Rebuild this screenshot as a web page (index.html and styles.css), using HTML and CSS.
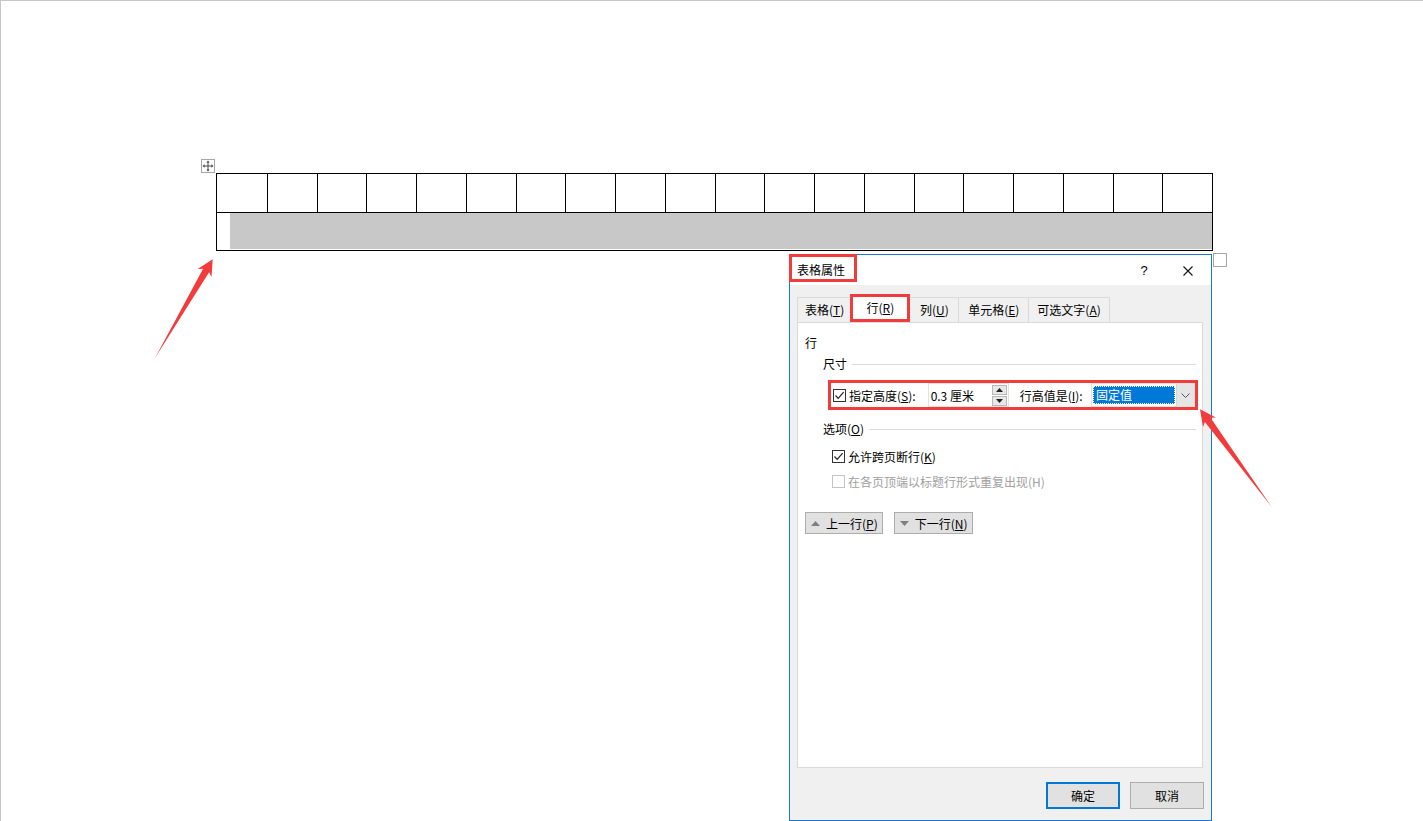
FILE: index.html
```html
<html>
<head>
    <title>表格属性</title>
    <link rel="stylesheet" href="styles.css">
</head>
<body>
    <div class="page">
        <div class="table-area">
            <div class="move-handle">
                <svg width="12" height="12" viewBox="0 0 12 12">
                    <path d="M6 2v8M2 6h8" stroke="#4a4a4a" stroke-width="1" fill="none"/>
                    <path d="M6 0.5L4.3 2.6H7.7Z M6 11.5L4.3 9.4H7.7Z M0.5 6L2.6 4.3V7.7Z M11.5 6L9.4 4.3V7.7Z" fill="#4a4a4a"/>
                </svg>
            </div>
            <div class="doc-table">
                <div class="doc-row">
                    <div></div><div></div><div></div><div></div><div></div>
                    <div></div><div></div><div></div><div></div><div></div>
                    <div></div><div></div><div></div><div></div><div></div>
                    <div></div><div></div><div></div><div></div><div></div>
                </div>
                <div class="doc-row-merged">
                    <div class="shade"></div>
                </div>
            </div>
            <div class="resize-handle"></div>
        </div>
    </div>

    <div class="dialog">
        <div class="titlebar">
            <div class="title">表格属性</div>
            <div class="help">?</div>
            <div class="close">
                <svg width="10" height="10" viewBox="0 0 10 10">
                    <path d="M0.5 0.5L9.5 9.5M9.5 0.5L0.5 9.5" stroke="#111" stroke-width="1.1" fill="none"/>
                </svg>
            </div>
        </div>

        <div class="dlg-body">
            <div class="tabs">
                <div class="tab">表格(<u>T</u>)</div>
                <div class="tab active">行(<u>R</u>)</div>
                <div class="tab">列(<u>U</u>)</div>
                <div class="tab">单元格(<u>E</u>)</div>
                <div class="tab">可选文字(<u>A</u>)</div>
            </div>

            <div class="panel">
                <div class="panel-title">行</div>

                <div class="group-head">尺寸</div>
                <div class="size-row">
                    <span class="cb">
                        <svg width="11" height="11" viewBox="0 0 11 11"><path d="M1.5 5.5L4.2 8.3L9.6 2.2" stroke="#222" stroke-width="1.2" fill="none"/></svg>
                    </span>
                    <span class="field-label">指定高度(<u>S</u>):</span>
                    <div class="num-input">
                        <span class="num-value">0.3 厘米</span>
                        <div class="spin">
                            <div class="spin-btn">
                                <svg width="7" height="4" viewBox="0 0 7 4"><path d="M3.5 0L7 4H0Z" fill="#222"/></svg>
                            </div>
                            <div class="spin-btn">
                                <svg width="7" height="4" viewBox="0 0 7 4"><path d="M3.5 4L7 0H0Z" fill="#222"/></svg>
                            </div>
                        </div>
                    </div>
                    <span class="field-label rule-label">行高值是(<u>I</u>):</span>
                    <div class="select">
                        <div class="select-value">固定值</div>
                        <div class="select-drop">
                            <svg width="9" height="5" viewBox="0 0 9 5"><path d="M0.5 0.5L4.5 4.5L8.5 0.5" stroke="#555" stroke-width="1" fill="none"/></svg>
                        </div>
                    </div>
                </div>

                <div class="group-head options-head">选项(<u>O</u>)</div>
                <div class="check-row first">
                    <span class="cb">
                        <svg width="11" height="11" viewBox="0 0 11 11"><path d="M1.5 5.5L4.2 8.3L9.6 2.2" stroke="#222" stroke-width="1.2" fill="none"/></svg>
                    </span>
                    <span>允许跨页断行(<u>K</u>)</span>
                </div>
                <div class="check-row disabled">
                    <span class="cb"></span>
                    <span>在各页顶端以标题行形式重复出现(H)</span>
                </div>

                <div class="nav-buttons">
                    <div class="nav-btn">
                        <svg width="9" height="5" viewBox="0 0 9 5"><path d="M4.5 0L9 5H0Z" fill="#808080"/></svg>
                        <span>上一行(<u>P</u>)</span>
                    </div>
                    <div class="nav-btn">
                        <svg width="9" height="5" viewBox="0 0 9 5"><path d="M4.5 5L9 0H0Z" fill="#808080"/></svg>
                        <span>下一行(<u>N</u>)</span>
                    </div>
                </div>
            </div>

            <div class="dlg-footer">
                <div class="btn default">确定</div>
                <div class="btn">取消</div>
            </div>
        </div>
    </div>

    <!-- annotation arrows -->
    <svg class="arrows" width="1423" height="821" viewBox="0 0 1423 821">
        <polygon points="212.7,259.3 211.5,277.1 209.1,272.3 155,358 203.1,268.7 197.7,269.1" fill="#f23c3c"/>
        <polygon points="1200,409.3 1215.9,417.5 1210.5,417.7 1271.7,507 1204.9,421.9 1203,426.9" fill="#f23c3c"/>
    </svg>
</body>
</html>
```

FILE: styles.css
```css
body {
    margin: 0;
    background-color: #ffffff;
    color: #000000;
    font-family: "Noto Sans CJK SC", "Microsoft YaHei", sans-serif;
    font-size: 12px;
    overflow: hidden;
}

u {
    text-underline-offset: 1px;
}

.page {
    height: 821px;
    box-sizing: border-box;
    border-top: 1px solid #c6c6c6;
    border-left: 1px solid #c6c6c6;
    padding: 158px 0 0 200px;
}

.table-area {
    display: grid;
    grid-template-columns: 15px 997px 16px;
    grid-template-rows: 14px 78px 16px;
}

.move-handle {
    width: 14px;
    height: 14px;
    box-sizing: border-box;
    border: 1px solid #a6a6a6;
    display: flex;
    align-items: center;
    justify-content: center;
}

.doc-table {
    grid-column: 2;
    grid-row: 2;
    border: 1px solid #000;
}

.doc-row {
    display: grid;
    grid-template-columns: repeat(20, 1fr);
    height: 38px;
    border-bottom: 1px solid #000;
}

.doc-row div + div {
    border-left: 1px solid #000;
}

.doc-row-merged {
    height: 37px;
    box-sizing: border-box;
    padding: 0 0 1px 13px;
}

.shade {
    height: 100%;
    background-color: #c8c8c8;
}

.resize-handle {
    grid-column: 3;
    grid-row: 3;
    width: 14px;
    height: 14px;
    box-sizing: border-box;
    border: 1px solid #a6a6a6;
    margin-top: 2px;
}

/* dialog window */
.dialog {
    position: absolute;
    left: 789px;
    top: 254px;
    width: 423px;
    height: 567px;
    box-sizing: border-box;
    border: 1px solid #1979d4;
    background-color: #f0f0f0;
    display: flex;
    flex-direction: column;
}

.titlebar {
    height: 30px;
    flex-shrink: 0;
    background-color: #ffffff;
    display: flex;
    align-items: flex-start;
}

.title {
    margin: -1px 0 0 -1px;
    width: 68px;
    height: 28px;
    box-sizing: border-box;
    border: 3px solid #f23b3b;
    padding: 4px 0 0 5px;
    line-height: 17px;
}

.help {
    margin-left: auto;
    width: 42px;
    height: 30px;
    line-height: 32px;
    text-align: center;
    font-family: "Liberation Sans", Arial, sans-serif;
    font-size: 13px;
}

.close {
    width: 46px;
    height: 31px;
    display: flex;
    align-items: center;
    justify-content: center;
}

.dlg-body {
    flex: 1;
    padding: 9px 7px 0 7px;
    display: flex;
    flex-direction: column;
}

.tabs {
    display: flex;
    align-items: flex-end;
    height: 28px;
}

.tab {
    height: 25px;
    min-width: 50px;
    box-sizing: border-box;
    border: 1px solid #d9d9d9;
    border-bottom: none;
    margin-left: -1px;
    padding: 0 8px;
    line-height: 24px;
    text-align: center;
}

.tab:first-child {
    margin-left: 0;
    padding: 0 6px 0 7px;
}

.tab.active {
    height: 28px;
    min-width: 60px;
    border: 3px solid #f23b3b;
    background-color: #ffffff;
    line-height: 21px;
    position: relative;
}

.tab:nth-child(4) {
    min-width: 71px;
}

.tab:nth-child(5) {
    min-width: 81px;
}

.panel {
    width: 406px;
    height: 446px;
    box-sizing: border-box;
    border: 1px solid #d9d9d9;
    background-color: #ffffff;
    padding: 12px 0 0 7px;
}

.panel-title {
    line-height: 16px;
}

.group-head {
    margin: 5px 6px 0 18px;
    display: flex;
    align-items: center;
    line-height: 16px;
}

.group-head::after {
    content: "";
    flex: 1;
    margin-left: 5px;
    border-top: 1px solid #dcdcdc;
}

.size-row {
    margin: 8px 4px 0 23px;
    height: 30px;
    box-sizing: border-box;
    border: 3px solid #f23b3b;
    padding-left: 2px;
    display: flex;
    align-items: center;
}

.cb {
    width: 13px;
    height: 13px;
    box-sizing: border-box;
    border: 1px solid #333;
    background-color: #fff;
    display: flex;
    align-items: center;
    justify-content: center;
    flex-shrink: 0;
}

.field-label {
    margin-left: 3px;
}

.num-input {
    margin-left: 12px;
    width: 81px;
    height: 24px;
    box-sizing: border-box;
    border: 1px solid #e2e2e2;
    display: flex;
    align-items: center;
    padding-left: 2px;
}

.spin {
    margin-left: auto;
    margin-right: 1px;
    display: flex;
    flex-direction: column;
    gap: 1px;
}

.spin-btn {
    width: 15px;
    height: 10px;
    box-sizing: border-box;
    border: 1px solid #b9b9b9;
    background-color: #e8e8e8;
    display: flex;
    align-items: center;
    justify-content: center;
}

.rule-label {
    margin-left: 11px;
}

.select {
    margin-left: auto;
    width: 104px;
    height: 24px;
    box-sizing: border-box;
    border: 1px solid #e2e2e2;
    background-color: #fff;
    display: flex;
}

.select-value {
    flex: 1;
    margin: 2px 1px 2px 1px;
    padding-left: 3px;
    background-color: #0078d7;
    color: #ffffff;
    line-height: 18px;
    outline: 1px dotted #ffffff;
    outline-offset: -1px;
}

.select-drop {
    width: 17px;
    background-color: #e5e5e5;
    border-left: 1px solid #d6d6d6;
    display: flex;
    align-items: center;
    justify-content: center;
}

.options-head {
    margin-top: 11px;
}

.check-row {
    height: 25px;
    margin-left: 27px;
    display: flex;
    align-items: center;
    gap: 3px;
}

.check-row.first {
    margin-top: 7px;
}

.check-row.disabled {
    color: #a0a0a0;
}

.check-row.disabled .cb {
    border-color: #c4c4c4;
}

.nav-buttons {
    margin-top: 18px;
    display: flex;
    gap: 11px;
}

.nav-btn {
    height: 22px;
    box-sizing: border-box;
    border: 1px solid #adadad;
    background-color: #e1e1e1;
    padding: 0 4px 0 5px;
    display: flex;
    align-items: center;
    gap: 6px;
}

.dlg-footer {
    margin-top: 14px;
    display: flex;
    justify-content: flex-end;
    gap: 10px;
}

.btn {
    width: 74px;
    height: 27px;
    box-sizing: border-box;
    border: 1px solid #adadad;
    background-color: #e1e1e1;
    display: flex;
    align-items: center;
    justify-content: center;
}

.btn.default {
    border: 2px solid #0078d7;
}

.arrows {
    position: absolute;
    left: 0;
    top: 0;
    pointer-events: none;
}
```
